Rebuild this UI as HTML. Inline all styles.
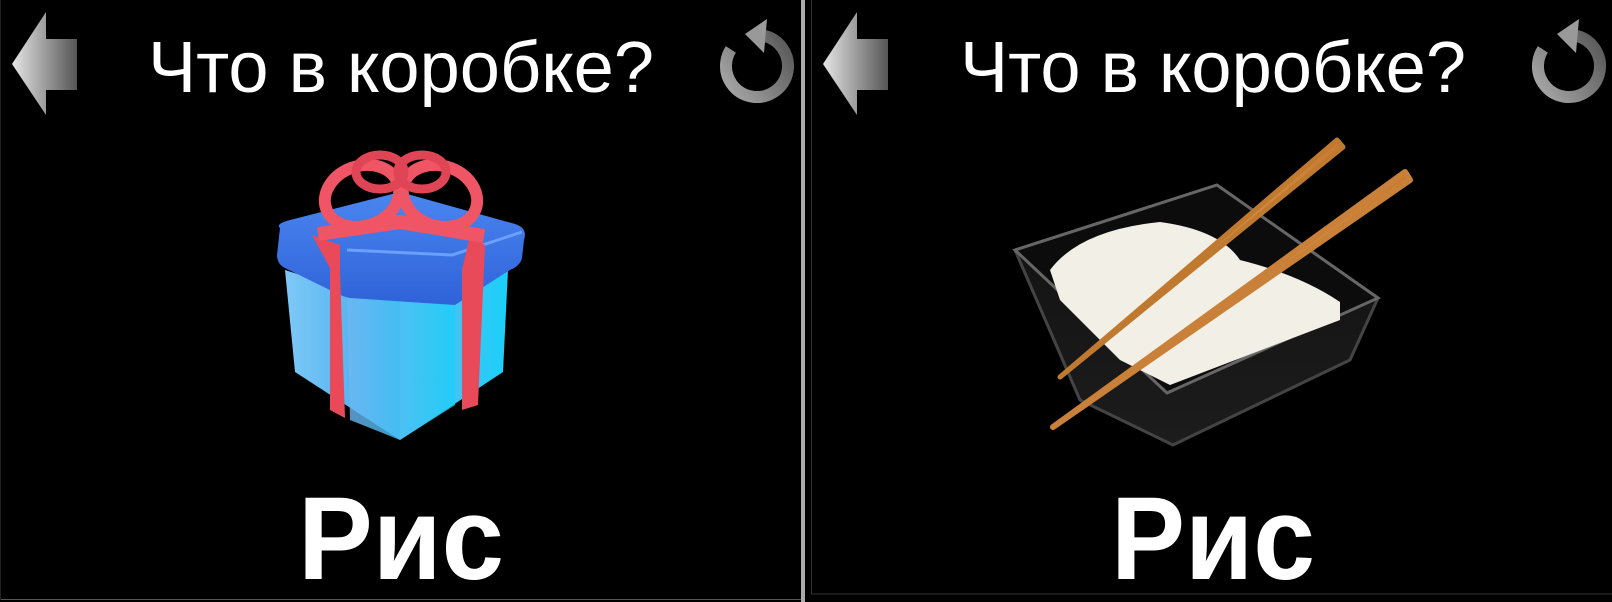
<!DOCTYPE html>
<html><head><meta charset="utf-8"><style>
html,body{margin:0;padding:0;background:#000;width:1612px;height:602px;overflow:hidden}
svg{position:absolute;left:0;top:0}
</style></head><body>
<svg width="1612" height="602" viewBox="0 0 1612 602">
<defs>
<linearGradient id="ag" x1="0" x2="1"><stop offset="0" stop-color="#e6e6e6"/><stop offset="1" stop-color="#555"/></linearGradient>
<linearGradient id="rg" x1="0" y1="0" x2="1" y2="1"><stop offset="0" stop-color="#aaa"/><stop offset="1" stop-color="#555"/></linearGradient>
<linearGradient id="lidg" x1="0" y1="0" x2="0" y2="1"><stop offset="0" stop-color="#4a86f0"/><stop offset="1" stop-color="#2f62d8"/></linearGradient>
<linearGradient id="frontg" x1="0" x2="1"><stop offset="0" stop-color="#6fb6f0"/><stop offset="1" stop-color="#19d0f8"/></linearGradient>
<linearGradient id="sideg" x1="0" x2="1"><stop offset="0" stop-color="#7ec8f6"/><stop offset="1" stop-color="#3aa8f0"/></linearGradient>
<linearGradient id="stick" x1="0" x2="1"><stop offset="0" stop-color="#f0b060"/><stop offset="1" stop-color="#c87a30"/></linearGradient>
<linearGradient id="bowlg" x1="0" y1="0" x2="0" y2="1"><stop offset="0" stop-color="#111"/><stop offset="1" stop-color="#1c1c1c"/></linearGradient>
</defs>
<rect x="801" y="0" width="4" height="602" fill="#aaa"/>
<line x1="0" y1="599.5" x2="801" y2="599.5" stroke="#555" stroke-width="1"/>
<rect x="811.5" y="-2" width="802" height="596" fill="none" stroke="#333" stroke-width="1"/>
<line x1="0.5" y1="0" x2="0.5" y2="600" stroke="#222"/>

<!-- left panel -->
<polygon points="12,64 46,12 46,39 77,39 77,90 46,90 46,115" fill="url(#ag)"/>
<circle cx="757" cy="66" r="31" fill="none" stroke="url(#rg)" stroke-width="12" stroke-dasharray="158 37" transform="rotate(-80 757 66)"/>
<polygon points="745,34 767,19 764,53" fill="#999"/>
<text x="401" y="92" text-anchor="middle" font-family="Liberation Sans, sans-serif" font-size="72" fill="#fff" textLength="506" lengthAdjust="spacingAndGlyphs">Что в коробке?</text>
<text x="401" y="579" text-anchor="middle" font-family="Liberation Sans, sans-serif" font-weight="bold" font-size="118" fill="#fff" textLength="206" lengthAdjust="spacingAndGlyphs">Рис</text>

<!-- gift -->
<polygon points="285,270 347,290 400,300 400,440 295,372" fill="url(#sideg)"/>
<polygon points="400,300 460,290 508,270 503,372 400,440" fill="url(#frontg)"/>
<polygon points="347,295 455,300 455,405 400,440 350,420" fill="url(#frontg)" opacity="0.8"/>
<path d="M280,228 Q275,224 290,220 L400,192 L515,224 Q528,228 524,240 L522,258 Q520,266 510,270 L455,305 L350,298 Q345,297 340,295 L285,268 Q277,264 277,255 Z" fill="url(#lidg)"/>
<path d="M347,250 L452,255 L522,232" fill="none" stroke="#6aa0ff" stroke-width="3"/>
<path d="M312,235 L330,268 L330,410 L345,418 L340,270 L340,245 Z" fill="#e84a5a"/>
<path d="M470,235 L485,245 L478,405 L462,410 L462,270 Z" fill="#e84a5a"/>
<path d="M318,234 L400,222 L484,236" fill="none" stroke="#f05565" stroke-width="14"/>
<ellipse cx="362" cy="196" rx="38" ry="30" fill="none" stroke="#f05565" stroke-width="12" transform="rotate(-20 362 196)"/>
<ellipse cx="440" cy="196" rx="38" ry="30" fill="none" stroke="#f05565" stroke-width="12" transform="rotate(20 440 196)"/>
<ellipse cx="380" cy="172" rx="24" ry="17" fill="none" stroke="#e04555" stroke-width="9"/>
<ellipse cx="422" cy="172" rx="24" ry="17" fill="none" stroke="#e04555" stroke-width="9"/>

<!-- right panel -->
<polygon points="823,64 857,12 857,39 888,39 888,90 857,90 857,115" fill="url(#ag)"/>
<circle cx="1569" cy="66" r="31" fill="none" stroke="url(#rg)" stroke-width="12" stroke-dasharray="158 37" transform="rotate(-80 1569 66)"/>
<polygon points="1557,34 1579,19 1576,53" fill="#999"/>
<text x="1213" y="92" text-anchor="middle" font-family="Liberation Sans, sans-serif" font-size="72" fill="#fff" textLength="506" lengthAdjust="spacingAndGlyphs">Что в коробке?</text>
<text x="1213" y="579" text-anchor="middle" font-family="Liberation Sans, sans-serif" font-weight="bold" font-size="118" fill="#fff" textLength="204" lengthAdjust="spacingAndGlyphs">Рис</text>

<!-- rice bowl -->
<path d="M1015,250 L1217,185 L1378,298 L1350,360 L1173,445 L1080,400 Z" fill="url(#bowlg)" stroke="#444" stroke-width="3"/>
<path d="M1015,250 L1217,185 L1378,298 L1167,393 Z" fill="#0c0c0c" stroke="#666" stroke-width="3"/>
<path d="M1050,270 Q1080,230 1160,222 Q1220,230 1240,260 Q1300,275 1340,302 L1340,320 L1170,385 L1120,360 L1060,300 Z" fill="#f2efe6"/>
<path d="M1337,140 L1343,147 L1060,377 Z" fill="url(#stick)" stroke="#c07a30" stroke-width="5" stroke-linejoin="round"/>
<path d="M1405,172 L1410,180 L1053,427 Z" fill="url(#stick)" stroke="#c98038" stroke-width="6" stroke-linejoin="round"/>
</svg>
</body></html>
